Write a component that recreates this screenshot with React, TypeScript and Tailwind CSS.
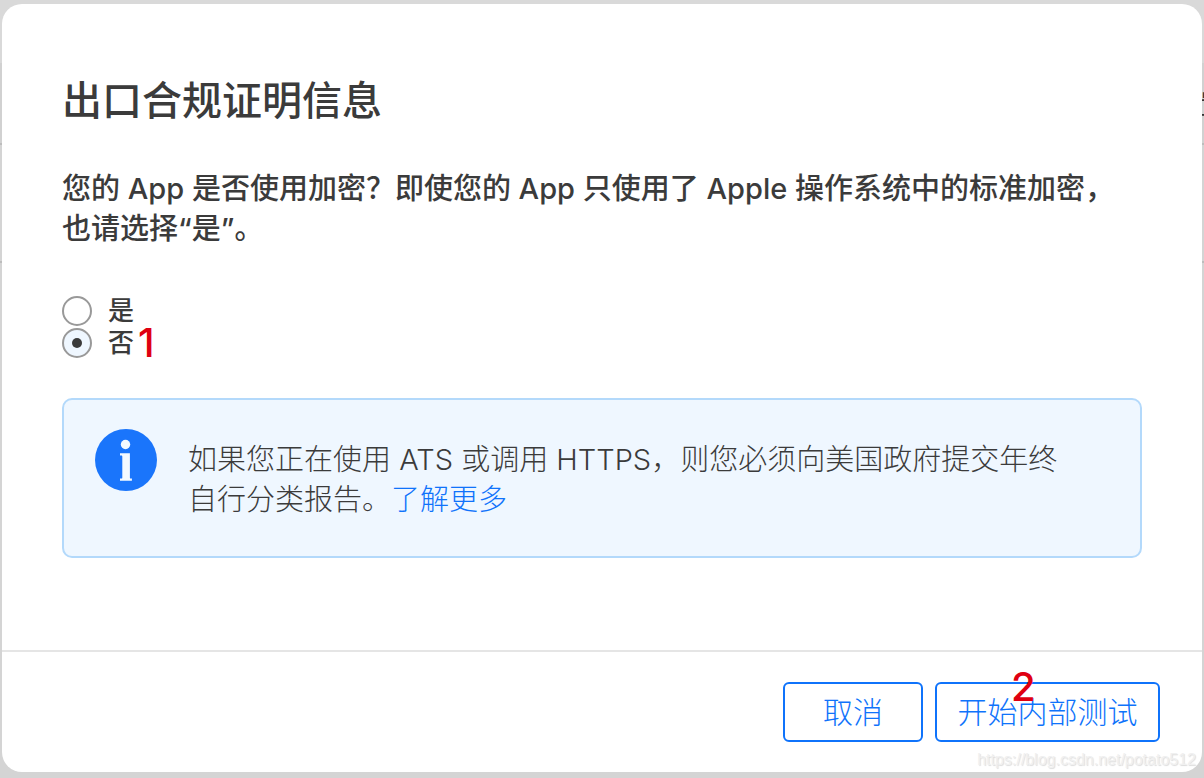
import { useState } from "react";

function InfoIcon() {
  return (
    <svg viewBox="0 0 62 62" className="size-[62px] shrink-0" aria-hidden="true">
      <circle cx="31" cy="31" r="31" fill="#1a75fb" />
      <circle cx="30.5" cy="15.5" r="4.7" fill="#f4faff" />
      <path
        d="M25 24.200h9.900V48.800c0 .6.300.800.900.800h1.100v2.200H25v-2.200h1.300c.7 0 1-.3 1-.9V27.600c0-.8-.3-1.200-1-1.200H25z"
        fill="#f4faff"
      />
    </svg>
  );
}

function Backdrop() {
  return (
    <div aria-hidden="true" className="absolute inset-0 flex flex-col overflow-hidden bg-[#d4d4d4]">
      <div className="h-[63px] shrink-0 bg-[#d9d9d9]" />
      <div className="flex h-20 shrink-0 items-center justify-end bg-[#d1d1d1] pt-1">
        <span className="-mr-[22px] text-[26px] font-medium leading-8 text-[#333]">置</span>
      </div>
      <div className="h-[120px] shrink-0 border-y-2 border-[#bdbdbd]" />
    </div>
  );
}

const radioClass =
  "grid size-[30px] shrink-0 appearance-none place-content-center rounded-full border-2 border-[#999] bg-white before:size-[10px] before:rounded-full before:content-[''] checked:bg-[#eff7ff] checked:before:bg-[#3b3b3b]";

const buttonClass =
  "h-[60px] rounded-md border-2 border-[#0f73fb] bg-white text-[30px] font-light leading-10 text-[#0f73fb]";

export default function App() {
  const [answer, setAnswer] = useState("no");

  return (
    <main className="relative min-h-screen bg-[#d4d4d4] px-0.5 pt-1 pb-1.5 font-[Inter,'Noto_Sans_CJK_SC',sans-serif] text-[#3b3b3b]">
      <Backdrop />
      <section
        role="dialog"
        aria-labelledby="title"
        className="relative flex min-h-[calc(100vh-10px)] flex-col rounded-[20px] bg-white"
      >
        <div className="grow px-[60px] pt-[73px] pb-[92px]">
          <h1 id="title" className="text-[40px] font-medium leading-[48px]">
            出口合规证明信息
          </h1>
          <form className="mt-11">
            <fieldset>
              <legend className="text-[29px] font-medium leading-10">
                您的 App 是否使用加密？即使您的 App 只使用了 Apple 操作系统中的标准加密，
                <br />
                也请选择“是”。
              </legend>
              <div className="mt-[47px] flex flex-col gap-0.5 text-[26px] font-medium leading-[30px]">
                <label className="flex items-center gap-4">
                  <input
                    type="radio"
                    name="encryption"
                    className={radioClass}
                    checked={answer === "yes"}
                    onChange={() => setAnswer("yes")}
                  />
                  是
                </label>
                <div className="flex items-center">
                  <label className="flex items-center gap-4">
                    <input
                      type="radio"
                      name="encryption"
                      className={radioClass}
                      checked={answer === "no"}
                      onChange={() => setAnswer("no")}
                    />
                    否
                  </label>
                  <span className="ml-1 text-[40px] font-medium text-[#df0011]">1</span>
                </div>
              </div>
            </fieldset>
          </form>
          <div className="mt-10 flex items-start gap-[31px] rounded-[10px] border-2 border-[#b3d9fb] bg-[#eff7ff] px-[31px] pt-[29px] pb-9">
            <InfoIcon />
            <p className="pt-[11px] text-[29px] font-light leading-10">
              如果您正在使用 ATS 或调用 HTTPS，则您必须向美国政府提交年终
              <br />
              自行分类报告。
              <a href="#learn-more" className="text-[#0f73fb]">
                了解更多
              </a>
            </p>
          </div>
        </div>
        <footer className="flex justify-end gap-3 border-t-2 border-[#e5e5e5] pt-[30px] pr-[42px] pb-[30px]">
          <button type="button" className={`${buttonClass} px-[38px]`}>
            取消
          </button>
          <div className="relative">
            <button type="button" className={`${buttonClass} min-w-[225px] px-5`}>
              开始内部测试
            </button>
            <span className="pointer-events-none absolute -top-[19px] left-[76px] text-[40px] font-medium leading-[48px] text-[#df0011]">
              2
            </span>
          </div>
        </footer>
        <span className="absolute right-1.5 bottom-0 font-['Liberation_Sans',sans-serif] text-base leading-6 text-[#f0f0f0] [text-shadow:1px_1px_1px_#dcdcdc]">
          https://blog.csdn.net/potato512
        </span>
      </section>
    </main>
  );
}
